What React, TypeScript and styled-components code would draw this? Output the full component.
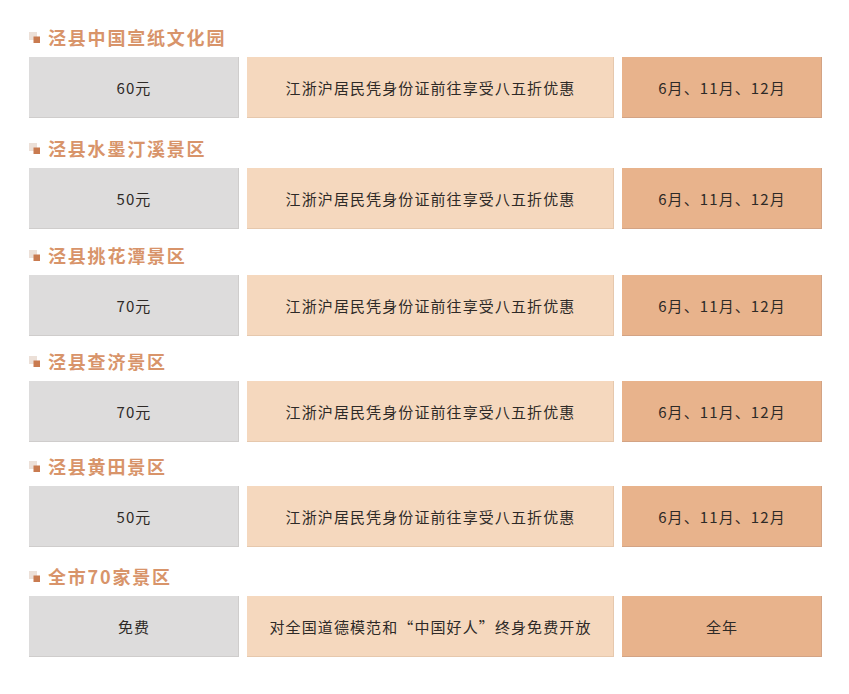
import React from 'react';
import styled, { createGlobalStyle } from 'styled-components';

const GlobalStyle = createGlobalStyle`
  html, body {
    margin: 0;
    padding: 0;
    background: #ffffff;
  }
  body {
    font-family: "Noto Sans CJK SC", "Noto Sans", sans-serif;
  }
`;

const Page = styled.div`
  width: 849px;
  height: 694px;
  box-sizing: border-box;
  padding: 25px 27px 0 29px;
  display: flex;
  flex-direction: column;
`;

const Section = styled.section<{ $gap: number }>`
  display: flex;
  flex-direction: column;
  gap: 8px;
  margin-top: ${({ $gap }) => $gap}px;
`;

const Heading = styled.h2`
  margin: 0;
  height: 24px;
  display: flex;
  align-items: center;
  gap: 8px;
  color: #d8946a;
  font-size: 18px;
  font-weight: 700;
  letter-spacing: 1.8px;
  line-height: 24px;
`;

const Row = styled.div`
  display: grid;
  grid-template-columns: 210px 367px 200px;
  gap: 8px;
  height: 61px;
`;

const Cell = styled.div<{ $bg: string; $edge: string }>`
  display: flex;
  align-items: center;
  justify-content: center;
  background: ${({ $bg }) => $bg};
  box-shadow: inset -1px -1px 0 ${({ $edge }) => $edge};
  color: #2e2a27;
  font-size: 15px;
  letter-spacing: 1.1px;
`;

const Marker: React.FC = () => (
  <svg width="11" height="11" viewBox="0 0 11 11" aria-hidden>
    <rect x="0" y="0" width="8" height="8" fill="#ece0d8" />
    <rect x="4.5" y="4.5" width="6.5" height="6.5" fill="#c97b50" />
  </svg>
);

type Spot = { name: string; price: string; offer: string; time: string; gap: number };

const spots: Spot[] = [
  { name: '泾县中国宣纸文化园', price: '60元', offer: '江浙沪居民凭身份证前往享受八五折优惠', time: '6月、11月、12月', gap: 0 },
  { name: '泾县水墨汀溪景区', price: '50元', offer: '江浙沪居民凭身份证前往享受八五折优惠', time: '6月、11月、12月', gap: 18 },
  { name: '泾县挑花潭景区', price: '70元', offer: '江浙沪居民凭身份证前往享受八五折优惠', time: '6月、11月、12月', gap: 14 },
  { name: '泾县查济景区', price: '70元', offer: '江浙沪居民凭身份证前往享受八五折优惠', time: '6月、11月、12月', gap: 13 },
  { name: '泾县黄田景区', price: '50元', offer: '江浙沪居民凭身份证前往享受八五折优惠', time: '6月、11月、12月', gap: 12 },
  { name: '全市70家景区', price: '免费', offer: '对全国道德模范和“中国好人”终身免费开放', time: '全年', gap: 17 },
];

const App: React.FC = () => (
  <>
    <GlobalStyle />
    <Page>
      {spots.map((s) => (
        <Section key={s.name} $gap={s.gap}>
          <Heading>
            <Marker />
            {s.name}
          </Heading>
          <Row>
            <Cell $bg="#dddcdc" $edge="#cfcdcc">{s.price}</Cell>
            <Cell $bg="#f5d8be" $edge="#e6c8ad">{s.offer}</Cell>
            <Cell $bg="#e8b38c" $edge="#d3a384">{s.time}</Cell>
          </Row>
        </Section>
      ))}
    </Page>
  </>
);

export default App;
